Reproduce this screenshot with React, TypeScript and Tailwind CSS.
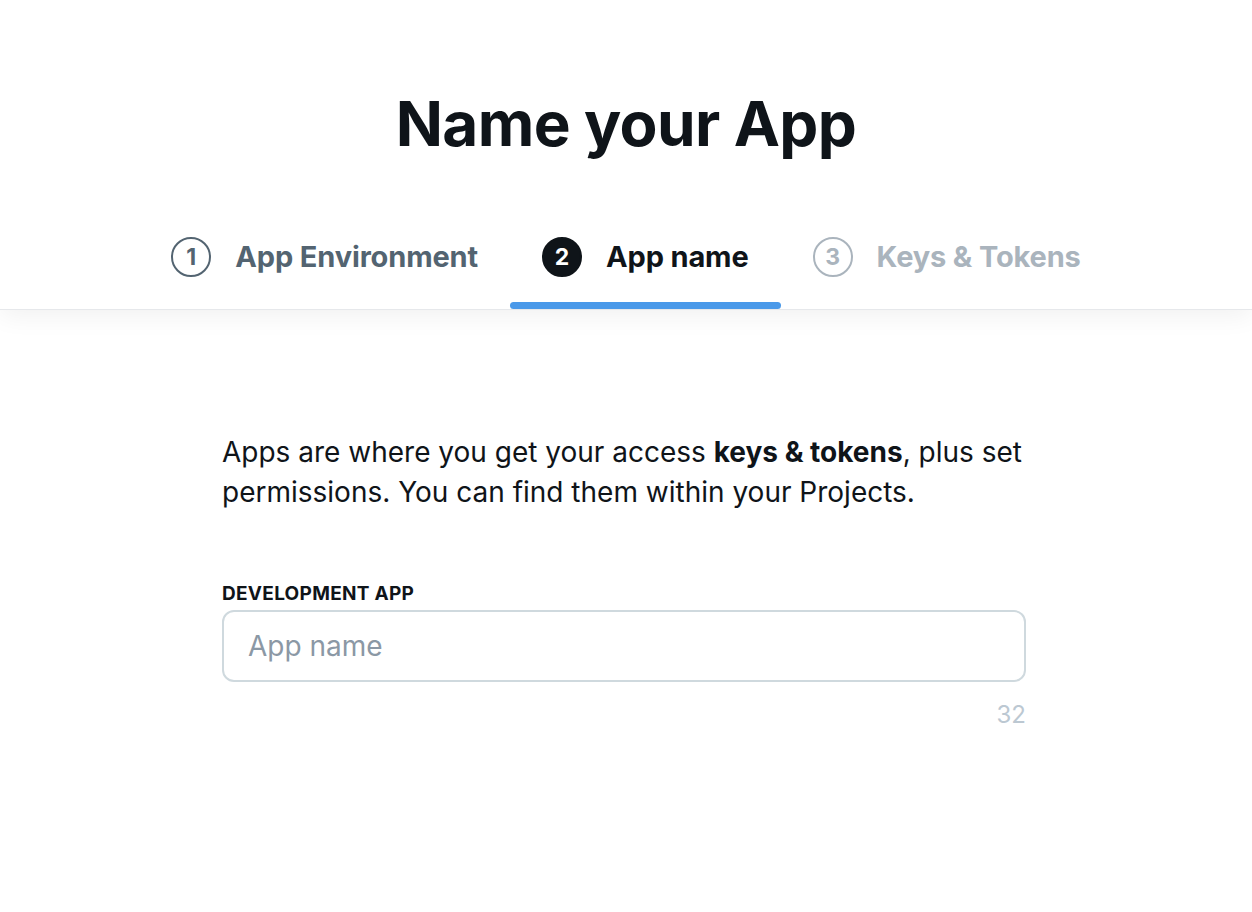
import { useState } from 'react';

const steps = [
  { n: 1, label: 'App Environment', state: 'done' },
  { n: 2, label: 'App name', state: 'active' },
  { n: 3, label: 'Keys & Tokens', state: 'todo' },
];

function StepTab({ n, label, state }: { n: number; label: string; state: string }) {
  const circle =
    state === 'active'
      ? 'bg-[#0f1419] text-white border-[#0f1419]'
      : state === 'done'
        ? 'border-[#536471] text-[#536471]'
        : 'border-[#aab4bd] text-[#aab4bd]';
  const text =
    state === 'active' ? 'text-[#0f1419]' : state === 'done' ? 'text-[#536471]' : 'text-[#aab4bd]';
  return (
    <div className="relative flex items-center gap-6 px-8 pt-[14px] pb-[30px]">
      <div className={`w-10 h-10 rounded-full border-2 flex items-center justify-center text-[23px] font-bold ${circle}`}>
        {n}
      </div>
      <span className={`text-[29px] font-bold tracking-[-0.005em] ${text}`}>{label}</span>
      {state === 'active' && (
        <div className="absolute left-0 right-0 bottom-0 h-[7px] rounded-full bg-[#4a99e9]" />
      )}
    </div>
  );
}

export default function App() {
  const [name, setName] = useState('');

  return (
    <div className="min-h-screen bg-white font-['Inter','Liberation_Sans',sans-serif] text-[#0f1419]">
      {/* Header */}
      <div className="relative bg-white border-b border-[#e6e8eb] shadow-[0_6px_24px_rgba(0,0,0,0.06)] z-10">
        <h1 className="pt-[84px] text-center text-[62px] leading-[80px] font-bold tracking-[-0.01em]">
          Name your App
        </h1>
        <div className="flex justify-center mt-[57px]">
          {steps.map((s) => (
            <StepTab key={s.n} {...s} />
          ))}
        </div>
      </div>

      {/* Body */}
      <div className="w-[808px] mx-auto pr-[4px] pt-[122px]">
        <p className="text-[28px] leading-[40px]">
          Apps are where you get your access <span className="font-bold">keys &amp; tokens</span>, plus set
          permissions. You can find them within your Projects.
        </p>

        <label className="block mt-[70px] text-[19px] leading-[24px] font-bold uppercase tracking-[0.015em]">
          Development App
        </label>
        <input
          value={name}
          onChange={(e) => setName(e.target.value)}
          placeholder="App name"
          className="mt-[4px] w-full h-[72px] rounded-[12px] border-2 border-[#cfd9de] px-6 text-[28px] placeholder-[#8b98a5] outline-none"
        />
        <div className="mt-[15px] text-right text-[24px] text-[#bcc8d2]">{32 - name.length}</div>
      </div>
    </div>
  );
}
